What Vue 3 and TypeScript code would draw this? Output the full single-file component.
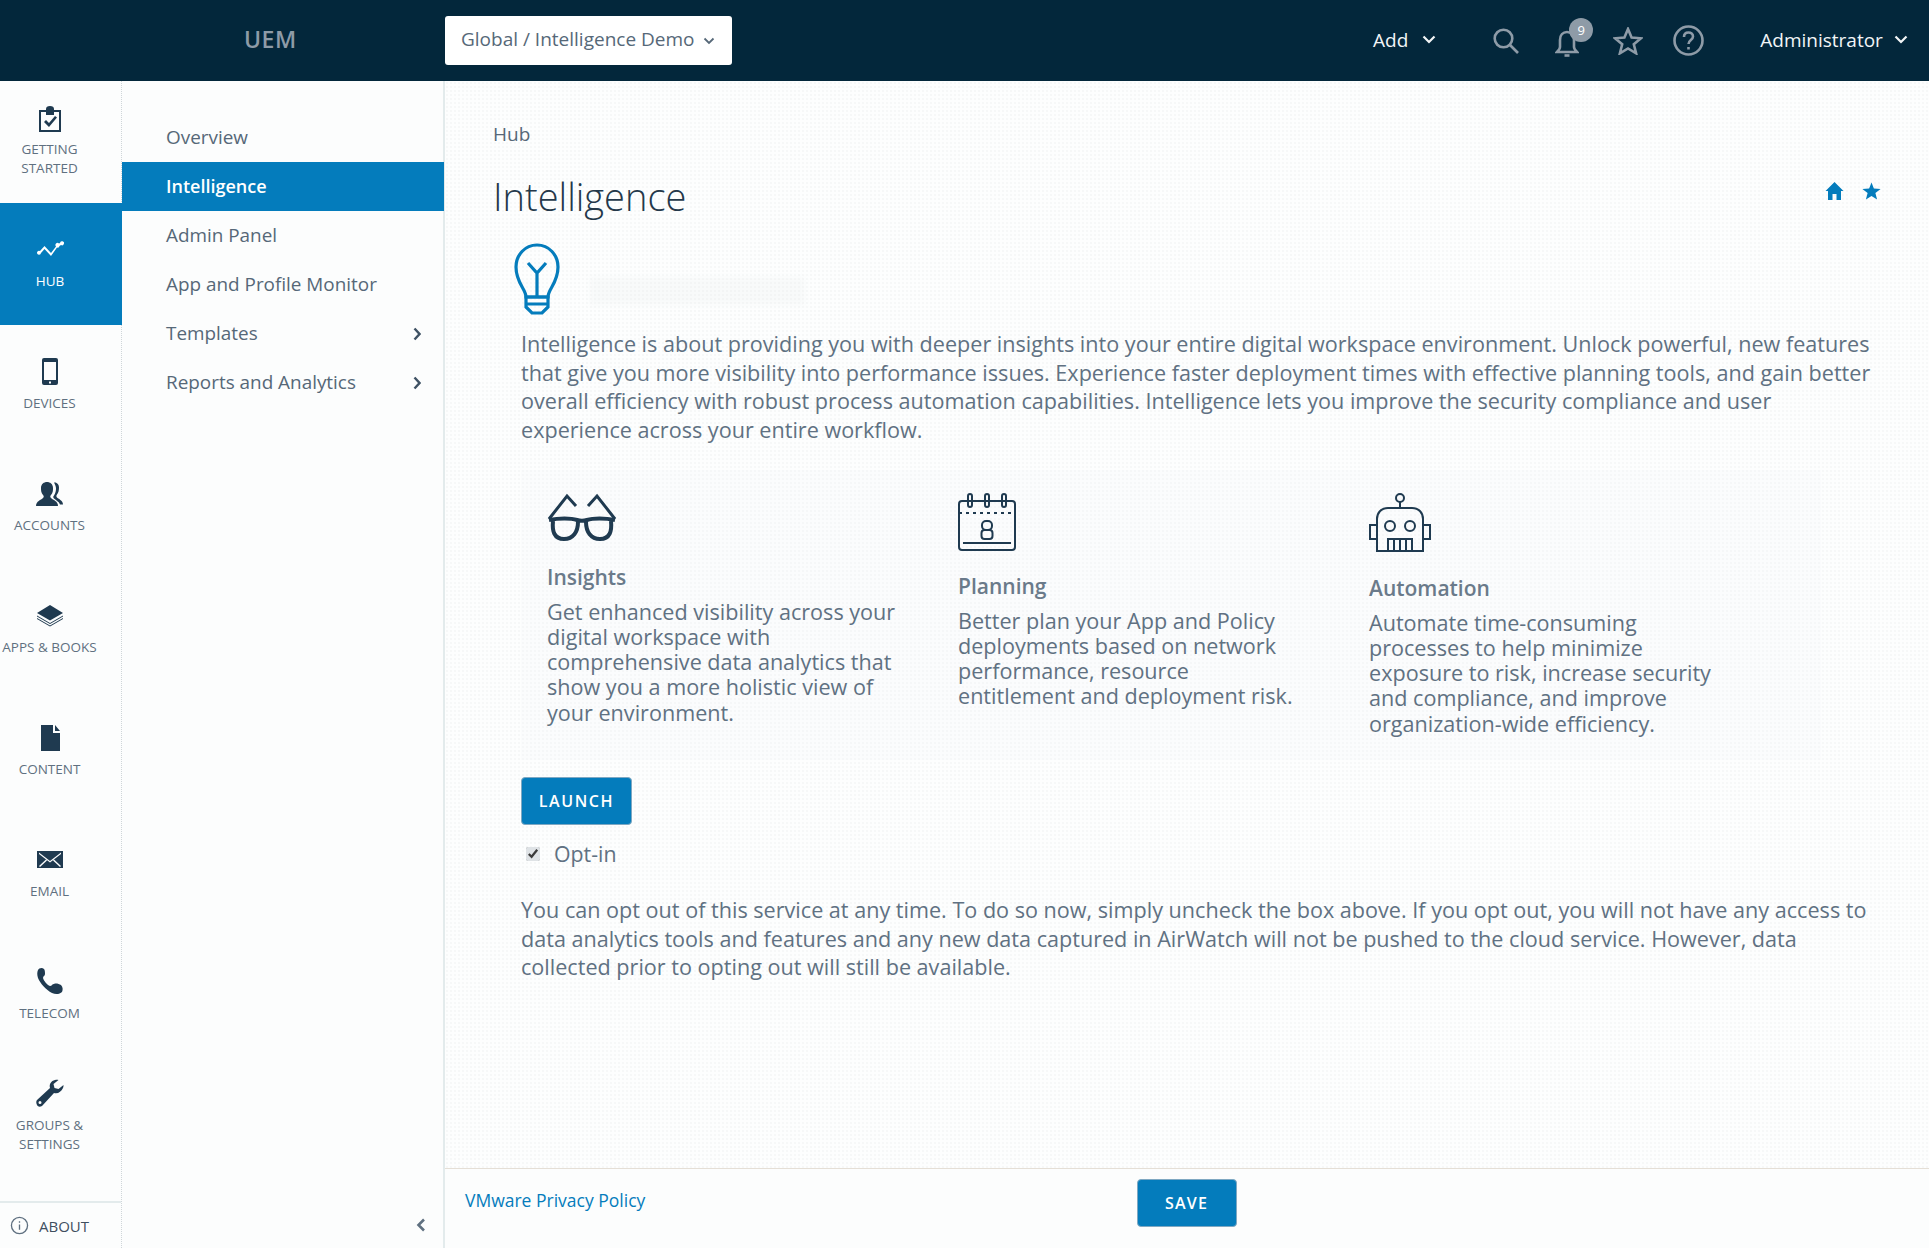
<template>
  <div class="page">
    <header class="topbar">
      <div class="logo">UEM</div>
      <button class="org-select">
        <span>Global / Intelligence Demo</span>
        <svg class="org-chevron" viewBox="0 0 12 8"><path d="M1.5 1.5 6 6l4.5-4.5" /></svg>
      </button>
      <div class="top-actions">
        <span class="top-link add">Add
          <svg class="top-chevron" viewBox="0 0 14 9"><path d="M1.5 1.5 7 7l5.5-5.5" /></svg>
        </span>
        <svg class="top-icon search" viewBox="0 0 26 26"><circle cx="10.5" cy="10.5" r="8.8" /><path d="m17 17 8 8" /></svg>
        <span class="bell-wrap">
          <svg class="top-icon bell" viewBox="0 0 24 30"><path d="M2 24h20c-2-2-3-3-3-5v-7c0-5-3-8-7-8s-7 3-7 8v7c0 2-1 3-3 5Z" /><path d="M9.5 27.5h5" /></svg>
          <span class="badge">9</span>
        </span>
        <svg class="top-icon star" viewBox="0 0 30 28"><path d="m15 2 3.6 8.6 9.4.7-7.2 6 2.3 9-8.1-4.9-8.1 4.9 2.3-9-7.2-6 9.4-.7Z" /></svg>
        <svg class="top-icon help" viewBox="0 0 31 31"><circle cx="15.5" cy="15.5" r="14" /><path d="M11 12c0-3 2-4.500 4.500-4.500S20 9 20 11.500c0 3.500-4.500 3.500-4.500 7.500" /><path d="M15.500 22v2.500" /></svg>
        <span class="top-link admin">Administrator
          <svg class="top-chevron" viewBox="0 0 14 9"><path d="M1.5 1.5 7 7l5.500-5.500" /></svg>
        </span>
      </div>
    </header>

    <div class="body">
      <aside class="rail">
        <a v-for="item in railItems" :key="item.label" :class="['rail-item', { active: item.active, 'two-line': item.twoLine }]">
          <svg class="rail-icon" viewBox="0 0 28 28"><path :d="item.icon" fill-rule="evenodd" /></svg>
          <span class="rail-label">{{ item.label }}</span>
        </a>
        <div class="about">
          <svg class="about-icon" viewBox="0 0 20 20"><circle cx="10" cy="10" r="8.500" /><path d="M10 9v5.500M10 5.500v1.500" /></svg>
          ABOUT
        </div>
      </aside>

      <nav class="subnav">
        <ul class="subnav-list">
          <li v-for="link in subLinks" :key="link.label" :class="['subnav-item', { current: link.current }]">
            <span class="subnav-text">{{ link.label }}</span>
            <svg v-if="link.more" class="more" viewBox="0 0 8 14"><path d="m1.500 1.500 5 5.500-5 5.500" /></svg>
          </li>
        </ul>
        <div class="collapse">
          <svg viewBox="0 0 10 14"><path d="M8 1.500 2.500 7 8 12.500" /></svg>
        </div>
      </nav>

      <main class="main">
        <div class="content">
          <div class="crumb">Hub</div>
          <div class="title-row">
            <h1>Intelligence</h1>
            <div class="title-tools">
              <svg class="tool" viewBox="0 0 18 18"><path d="M9 0 18 9h-2.500v9h-4.500v-6H7v6H2.500V9H0Z" /></svg>
              <svg class="tool" viewBox="0 0 20 18"><path d="m10 0 2.500 6.400 7.100.4-5.500 4.400 1.800 6.800-5.900-3.800-5.900 3.800 1.800-6.800L.4 6.800l7.100-.4Z" /></svg>
            </div>
          </div>

          <div class="brand-row">
            <svg class="bulb" viewBox="0 0 46 72">
              <path d="M12 54c0-8-10-14-10-30C2 12 11 2 23 2s21 10 21 22c0 16-10 22-10 30Z" />
              <path d="M12 54h22v10l-6 6h-10l-6-6Z" />
              <path d="M12 61h22M23 54V30M14 20l9 10 9-10" />
            </svg>
            <div class="brand-blur"></div>
          </div>

          <div class="inner">
            <p class="text">Intelligence is about providing you with deeper insights into your entire digital workspace environment. Unlock powerful, new features that give you more visibility into performance issues. Experience faster deployment times with effective planning tools, and gain better overall efficiency with robust process automation capabilities. Intelligence lets you improve the security compliance and user experience across your entire workflow.</p>

            <section class="features">
              <article class="feature insights">
                <svg class="glasses" viewBox="0 0 70 48">
                  <path d="M2 26 20 3l9 10M68 26 50 3l-9 10" class="thin" />
                  <path d="M2 27c10-2 22-2 28 0 3 1 7 1 10 0 6-2 18-2 28 0" />
                  <path d="M6 28c-1 10 1 18 11 18 9 0 14-7 14-17M64 28c1 10-1 18-11 18-9 0-14-7-14-17" />
                </svg>
                <h2>Insights</h2>
                <p>Get enhanced visibility across your digital workspace with comprehensive data analytics that show you a more holistic view of your environment.</p>
              </article>
              <article class="feature planning">
                <svg class="calendar" viewBox="0 0 58 58">
                  <rect x="1" y="8" width="56" height="49" rx="3" />
                  <path d="M1 20h56" stroke-dasharray="3 4" />
                  <rect x="10" y="1" width="4" height="13" rx="2" />
                  <rect x="27" y="1" width="4" height="13" rx="2" />
                  <rect x="44" y="1" width="4" height="13" rx="2" />
                  <path d="M5 50h48" />
                  <rect x="24" y="28" width="10" height="9" rx="4" />
                  <rect x="23.500" y="37" width="11" height="9" rx="3" />
                </svg>
                <h2>Planning</h2>
                <p>Better plan your App and Policy deployments based on network performance, resource entitlement and deployment risk.</p>
              </article>
              <article class="feature automation">
                <svg class="robot" viewBox="0 0 62 59">
                  <circle cx="31" cy="5" r="4" />
                  <path d="M31 9v6" />
                  <path d="M8 58V26c0-6 4-11 11-11h24c7 0 11 5 11 11v32Z" />
                  <path d="M8 32H1v14h7M54 32h7v14h-7" />
                  <circle cx="21" cy="33" r="5" />
                  <circle cx="41" cy="33" r="5" />
                  <path d="M19 58V46h24v12M25 46v12M31 46v12M37 46v12" />
                </svg>
                <h2>Automation</h2>
                <p>Automate time-consuming processes to help minimize exposure to risk, increase security and compliance, and improve organization-wide efficiency.</p>
              </article>
            </section>

            <button class="btn launch">LAUNCH</button>
            <label class="optin">
              <input type="checkbox" checked />
              <span>Opt-in</span>
            </label>
            <p class="text optout">You can opt out of this service at any time. To do so now, simply uncheck the box above. If you opt out, you will not have any access to data analytics tools and features and any new data captured in AirWatch will not be pushed to the cloud service. However, data collected prior to opting out will still be available.</p>
          </div>
        </div>

        <footer class="footer">
          <a class="privacy">VMware Privacy Policy</a>
          <button class="btn save">SAVE</button>
        </footer>
      </main>
    </div>
  </div>
</template>

<script setup lang="ts">
interface RailItem {
  label: string
  icon: string
  active?: boolean
  twoLine?: boolean
}

interface SubLink {
  label: string
  current?: boolean
  more?: boolean
}

const railItems: RailItem[] = [
  {
    label: 'GETTING STARTED',
    twoLine: true,
    icon: 'M3 7h7V6a4 3 0 0 1 8 0v1h7v22H3Zm2 2v18h18V9h-5v3H10V9Zm3 10 2-2 3 3 6-7 2 1.500-8 9.500Z'
  },
  {
    label: 'HUB',
    active: true,
    icon: 'M1 17.500a2 2 0 0 1 3-1.500l4.500-5 6.500 7 5-6.500a2 2 0 0 1 3-3l1-.5a2 2 0 1 1 1 2l-1.500 1a2 2 0 0 1-2.500 1.500L15 21l-6.500-7-3.500 4a2 2 0 0 1-4-.5Z'
  },
  {
    label: 'DEVICES',
    icon: 'M6 3a2 2 0 0 1 2-2h12a2 2 0 0 1 2 2v23a2 2 0 0 1-2 2H8a2 2 0 0 1-2-2Zm2 2v18h12V5Zm5 19.500v2h2v-2Z'
  },
  {
    label: 'ACCOUNTS',
    icon: 'M0 27c0-5 5-6 7-8 1-1 1-2 0-3-2-2-2-5-2-7 0-4 3-6 6-6s6 2 6 6c0 2 0 5-2 7-1 1-1 2 0 3 2 2 7 3 7 8ZM18 3.500c3-.5 5 2 5 5 0 3-.5 5-2 7-.8 1-.8 2 0 3 1 1 6 3 6 7h-3c-1-3-4-4-6-6-1-1-1-2 0-3 1.500-2 2-5 2-7 0-2-1-4-2-6Z'
  },
  {
    label: 'APPS & BOOKS',
    icon: 'M14 4 27 12l-13 7.500L1 12ZM1 14.500l13 7.500 13-7.500v1l-13 7.500-13-7.500Zm0 2.500 13 7.500 13-7.500v1l-13 7.500-13-7.500Z'
  },
  {
    label: 'CONTENT',
    icon: 'M5 2h12v8h7v18H5Zm14 0 5 6h-5Z'
  },
  {
    label: 'EMAIL',
    icon: 'M1 6h26v17H1ZM3 7.500l11 8.500 11-8.500v1.500l-11 8.500L3 9Zm0 13.500 7-6.500 1 1L4 22Zm22 0-7-6.500-1 1 7 6.500Z'
  },
  {
    label: 'TELECOM',
    icon: 'M2 3c1-2 4-3 6-1 1 1 1 4 1 5 0 2-2 2-2 4 1 3 4 7 7 8 2 0 2-2 4-2 2-1 5 0 7 1 2 2 2 5 1 7-2 2-6 3-10 1C10 23 4 16 2 11 1 8 1 5 2 3Z'
  },
  {
    label: 'GROUPS & SETTINGS',
    twoLine: true,
    icon: 'M19 1c-4 1-6 4-5 8L1 21c-1 1-1 3 0 5s3 2 5 1L18 14c4 1 7-1 9-5 .5-1 .5-2 .5-3l-5 4-4-1-1-4 5-4c-1-.5-2-.5-3.500 0ZM4 22a1.500 1.500 0 1 1 0 3 1.500 1.500 0 0 1 0-3Z'
  }
]

const subLinks: SubLink[] = [
  { label: 'Overview' },
  { label: 'Intelligence', current: true },
  { label: 'Admin Panel' },
  { label: 'App and Profile Monitor' },
  { label: 'Templates', more: true },
  { label: 'Reports and Analytics', more: true }
]
</script>

<style>
html,
body {
  margin: 0;
  background: #fff;
}
</style>

<style scoped>
.page {
  height: 1248px;
  display: flex;
  flex-direction: column;
  overflow: hidden;
  font-family: "Open Sans", "Noto Sans", sans-serif;
  color: #566878;
}

.topbar {
  height: 81px;
  flex: none;
  display: flex;
  align-items: center;
  background: #03273b;
}

.logo {
  width: 445px;
  box-sizing: border-box;
  padding: 0 0 4px 244px;
  font-size: 23px;
  font-weight: 600;
  color: #8e9ba7;
  letter-spacing: 0.5px;
}

.org-select {
  width: 287px;
  height: 49px;
  display: flex;
  align-items: center;
  gap: 9px;
  padding: 0 0 0 16px;
  border: none;
  border-radius: 3px;
  background: #fff;
  color: #566878;
  font-family: inherit;
  font-size: 19px;
  white-space: nowrap;
}

.org-select span {
  padding-bottom: 4px;
}

.org-chevron {
  width: 12px;
  height: 8px;
  fill: none;
  stroke: #566878;
  stroke-width: 1.800;
}

.top-actions {
  flex: 1;
  display: flex;
  align-items: center;
  height: 100%;
  padding-left: 641px;
}

.top-link {
  display: flex;
  align-items: center;
  padding-bottom: 2px;
  color: #f2f5f7;
  font-size: 19px;
  white-space: nowrap;
}

.top-chevron {
  width: 14px;
  height: 9px;
  fill: none;
  stroke: #f2f5f7;
  stroke-width: 2.200;
}

.add {
  gap: 14px;
  margin-right: 57px;
}

.admin {
  gap: 11px;
  margin-left: 56px;
}

.top-icon {
  fill: none;
  stroke: #8e9ba7;
  stroke-width: 2.600;
}

.search {
  width: 26px;
  height: 26px;
}

.bell-wrap {
  position: relative;
  display: flex;
  margin: 4px 0 0 36px;
}

.bell {
  width: 24px;
  height: 30px;
}

.badge {
  position: absolute;
  top: -10px;
  left: 14px;
  width: 24px;
  height: 24px;
  border-radius: 50%;
  background: #8e9ba7;
  color: #fff;
  font-size: 13px;
  line-height: 24px;
  text-align: center;
}

.star {
  width: 30px;
  height: 28px;
  margin-left: 34px;
}

.help {
  width: 31px;
  height: 31px;
  margin-left: 30px;
}

.body {
  flex: 1;
  display: flex;
  min-height: 0;
}

.rail {
  width: 122px;
  flex: none;
  box-sizing: border-box;
  display: flex;
  flex-direction: column;
  border-right: 1px dotted #cfd6d9;
  background: #fcfdfd;
}

.rail-item {
  height: 122px;
  flex: none;
  box-sizing: border-box;
  display: flex;
  flex-direction: column;
  align-items: center;
  justify-content: center;
  gap: 9px;
  padding: 0 22px 2px 0;
  color: #5f7080;
  text-align: center;
}

.rail-item.two-line {
  padding-bottom: 4px;
}

.rail-item.active {
  margin-right: -1px;
  background: #047cbc;
  color: #fff;
}

.rail-icon {
  width: 28px;
  height: 28px;
  flex: none;
  fill: #1f3a50;
  overflow: visible;
}

.active .rail-icon {
  fill: #fff;
}

.rail-label {
  width: 100px;
  font-size: 13.500px;
  line-height: 19px;
}

.about {
  margin-top: auto;
  height: 47px;
  display: flex;
  align-items: center;
  gap: 10px;
  padding-left: 10px;
  border-top: 2px solid #e3ebec;
  box-sizing: border-box;
  color: #3f4f5f;
  font-size: 15px;
}

.about-icon {
  width: 19px;
  height: 19px;
  fill: none;
  stroke: #5f7080;
  stroke-width: 1.400;
}

.subnav {
  width: 323px;
  flex: none;
  box-sizing: border-box;
  display: flex;
  flex-direction: column;
  border-right: 2px solid #e3ebec;
  background: #fcfdfd;
}

.subnav-list {
  margin: 0;
  padding: 32px 0 0;
  list-style: none;
}

.subnav-item {
  height: 49px;
  display: flex;
  align-items: center;
  justify-content: space-between;
  padding: 0 22px 0 44px;
  color: #566878;
  font-size: 18.900px;
}

.subnav-text {
  padding-bottom: 2px;
}

.subnav-item.current {
  margin-right: -1px;
  background: #047cbc;
  color: #fff;
  font-size: 18px;
  font-weight: 600;
}

.more {
  width: 8px;
  height: 14px;
  fill: none;
  stroke: #3f5264;
  stroke-width: 2.400;
}

.collapse {
  margin-top: auto;
  height: 47px;
  display: flex;
  align-items: center;
  justify-content: flex-end;
  padding-right: 17px;
}

.collapse svg {
  width: 10px;
  height: 14px;
  fill: none;
  stroke: #5f7080;
  stroke-width: 2.600;
}

.main {
  flex: 1;
  display: flex;
  flex-direction: column;
  min-width: 0;
  background-color: #fdfefe;
  background-image: radial-gradient(circle, #eef1f1 0.6px, transparent 0.8px);
  background-size: 4px 4px;
}

.content {
  flex: 1;
  padding: 41px 0 0 49px;
}

.crumb {
  margin-left: -1px;
  font-size: 19px;
  line-height: 24px;
}

.title-row {
  display: flex;
  justify-content: space-between;
  margin: 24px 0 0 -1px;
  padding-right: 48px;
}

h1 {
  margin: 0;
  color: #24384a;
  font-size: 38px;
  font-weight: 300;
  line-height: 52px;
}

.title-tools {
  display: flex;
  gap: 18px;
  padding-top: 12px;
}

.tool {
  height: 18px;
  width: 19px;
  fill: #047cbc;
}

.brand-row {
  display: flex;
  gap: 30px;
  margin: 21px 0 0 20px;
}

.bulb {
  width: 46px;
  height: 72px;
  fill: none;
  stroke: #047cbc;
  stroke-width: 3.200;
}

.brand-blur {
  width: 215px;
  height: 28px;
  margin-top: 34px;
  background: rgba(232, 237, 238, 0.22);
  filter: blur(3px);
}

.inner {
  padding: 15px 49px 0 27px;
}

.text {
  margin: 0;
  font-size: 21.600px;
  line-height: 28.700px;
  color: #607182;
}

.features {
  display: grid;
  grid-template-columns: 411px 411px 410px;
  width: 1300px;
  margin-top: 25px;
  height: 290px;
  box-sizing: border-box;
  padding: 23px 0 0 26px;
  background: rgba(240, 244, 245, 0.15);
}

.feature svg {
  display: block;
  fill: none;
  stroke: #1f3a50;
  stroke-width: 2;
}

.glasses {
  width: 70px;
  height: 48px;
}

.glasses path {
  stroke-width: 4;
}

.glasses .thin {
  stroke-width: 3;
}

.calendar {
  width: 58px;
  height: 58px;
}

.robot {
  width: 62px;
  height: 59px;
}

.feature h2 {
  margin: 20px 0 0;
  color: #6a7a8a;
  font-size: 21px;
  font-weight: 600;
  line-height: 32px;
}

.planning h2 {
  margin-top: 19px;
}

.automation h2 {
  margin-top: 20px;
}

.feature p {
  margin: 6px 0 0;
  color: #607182;
  font-size: 21.600px;
  line-height: 25.200px;
}

.insights p {
  max-width: 365px;
}

.planning p {
  max-width: 345px;
}

.automation p {
  max-width: 360px;
}

.btn {
  display: block;
  border: 1px solid #7fa8c2;
  border-radius: 4px;
  background: #047cbc;
  color: #fff;
  font-family: inherit;
  font-weight: 600;
}

.launch {
  width: 111px;
  height: 48px;
  margin-top: 17px;
  font-size: 16px;
  letter-spacing: 1.600px;
}

.optin {
  display: flex;
  align-items: center;
  gap: 14px;
  margin: 16px 0 0 5px;
  height: 26px;
  font-size: 21.300px;
  color: #607182;
}

.optin input {
  width: 14px;
  height: 14px;
  margin: 0;
  accent-color: #dfe3e6;
}

.optout {
  margin-top: 29px;
}

.footer {
  height: 80px;
  flex: none;
  box-sizing: border-box;
  display: grid;
  grid-template-columns: 1fr auto 1fr;
  align-items: start;
  padding: 10px 20px 0;
  border-top: 1px solid #e5dfd6;
  background: #fcfdfd;
}

.privacy {
  margin-top: 9px;
  color: #047cbc;
  font-size: 17.500px;
}

.save {
  width: 100px;
  height: 48px;
  margin-left: -1px;
  font-size: 16px;
  letter-spacing: 1.200px;
}
</style>
